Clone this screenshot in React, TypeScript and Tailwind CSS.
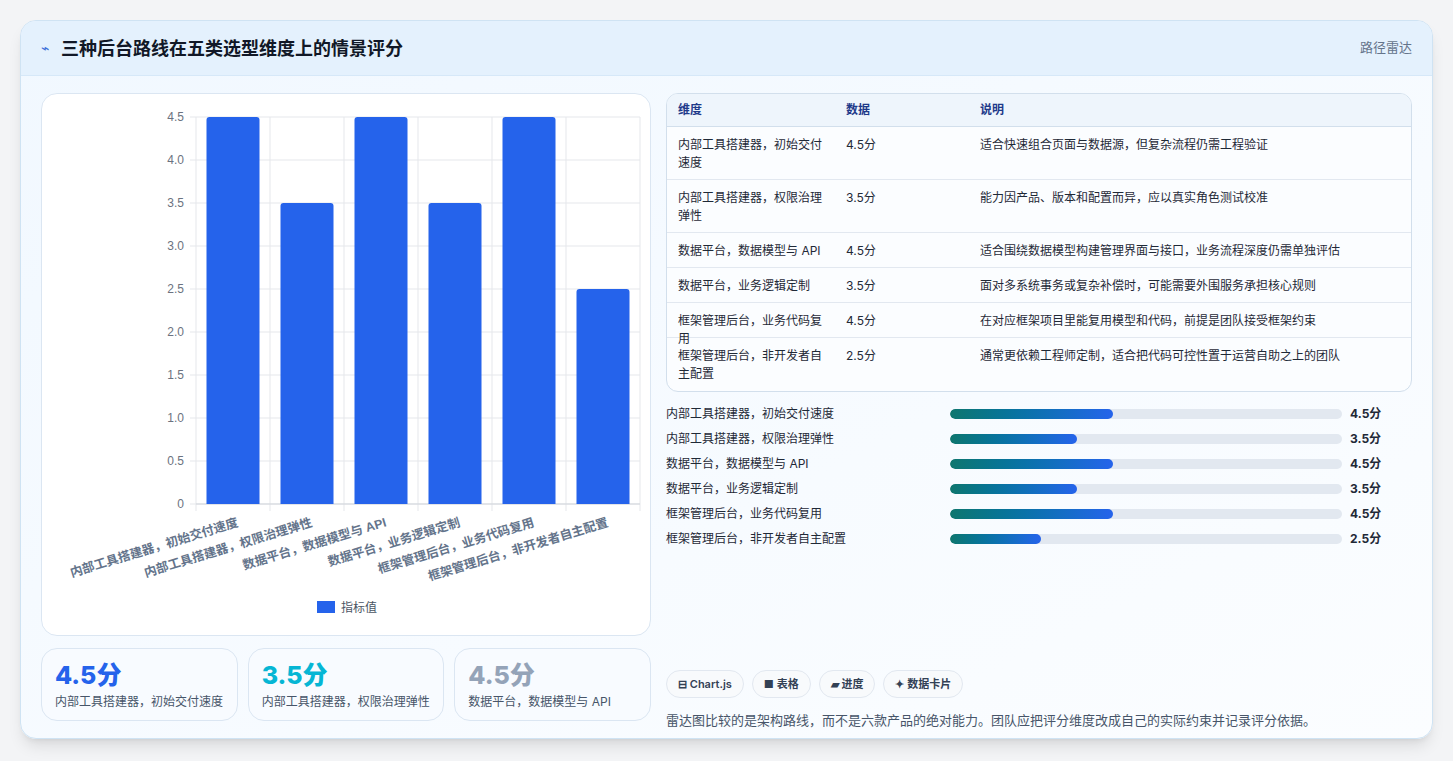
import React from "react";

const dims = [
  ["内部工具搭建器，初始交付速度", 4.5, "适合快速组合页面与数据源，但复杂流程仍需工程验证"],
  ["内部工具搭建器，权限治理弹性", 3.5, "能力因产品、版本和配置而异，应以真实角色测试校准"],
  ["数据平台，数据模型与 API", 4.5, "适合围绕数据模型构建管理界面与接口，业务流程深度仍需单独评估"],
  ["数据平台，业务逻辑定制", 3.5, "面对多系统事务或复杂补偿时，可能需要外围服务承担核心规则"],
  ["框架管理后台，业务代码复用", 4.5, "在对应框架项目里能复用模型和代码，前提是团队接受框架约束"],
  ["框架管理后台，非开发者自主配置", 2.5, "通常更依赖工程师定制，适合把代码可控性置于运营自助之上的团队"],
] as const;

const tallRows = [true, true, false, false, false, true];

function Chart() {
  const x0 = 154, x1 = 598, yTop = 23, yBot = 410;
  const unit = (yBot - yTop) / 4.5;
  const ticks = [0, 0.5, 1, 1.5, 2, 2.5, 3, 3.5, 4, 4.5];
  const cw = (x1 - x0) / 6;
  return (
    <svg width="610" height="543" className="block" style={{ fontFamily: "Liberation Sans, Noto Sans CJK SC, sans-serif" }}>
      {ticks.map((t) => {
        const y = yBot - t * unit;
        return (
          <g key={t}>
            <line x1={x0 - 6} x2={x1} y1={y} y2={y} stroke="#e5e7eb" />
            <text x={x0 - 12} y={y + 4} fontSize="12" fill="#6b7280" textAnchor="end">{t === 0 ? "0" : t.toFixed(1)}</text>
          </g>
        );
      })}
      {Array.from({ length: 7 }).map((_, i) => (
        <line key={i} x1={x0 + i * cw} x2={x0 + i * cw} y1={yTop} y2={yBot + 7} stroke="#e5e7eb" />
      ))}
      <line x1={x0} x2={x1} y1={yBot} y2={yBot} stroke="#d1d5db" />
      {dims.map(([label, v], i) => {
        const cx = x0 + i * cw + cw / 2;
        const h = v * unit;
        return (
          <g key={i}>
            <path d={`M${cx - 26.5} ${yBot} V${yBot - h + 3} Q${cx - 26.5} ${yBot - h} ${cx - 23.5} ${yBot - h} H${cx + 23.5} Q${cx + 26.5} ${yBot - h} ${cx + 26.5} ${yBot - h + 3} V${yBot} Z`} fill="#2563eb" />
            <text x={cx + 6} y={yBot + 22} fontSize="12.5" fontWeight="700" fill="#64748b" textAnchor="end" transform={`rotate(-17 ${cx + 6} ${yBot + 22})`}>{label}</text>
          </g>
        );
      })}
      <rect x="275" y="507" width="18" height="12" fill="#2563eb" />
      <text x="299" y="518" fontSize="12" fill="#4b5563">指标值</text>
    </svg>
  );
}

export default function App() {
  return (
    <div className="min-h-[761px] bg-[#f3f4f6] p-5" style={{ fontFamily: "Inter, 'Noto Sans CJK SC', sans-serif" }}>
      <div className="w-[1413px] h-[719px] rounded-2xl border border-[#cfe3f3] bg-gradient-to-br from-[#f1f8ff] to-[#fbfdff] shadow-lg overflow-hidden flex flex-col">
        <div className="h-[55px] shrink-0 flex items-center justify-between px-5 bg-[#e4f1fd] border-b border-[#d6e8f8]">
          <div className="flex items-center gap-3">
            <span className="text-[#3b6fd9] text-sm">⌁</span>
            <span className="text-[18px] font-bold text-[#111827]">三种后台路线在五类选型维度上的情景评分</span>
          </div>
          <span className="text-[13px] text-[#64748b]">路径雷达</span>
        </div>
        <div className="flex gap-[15px] px-5 pt-[17px]">
          <div className="w-[610px] flex flex-col gap-3">
            <div className="h-[543px] rounded-2xl border border-[#dbe6f2] bg-white overflow-hidden">
              <Chart />
            </div>
            <div className="grid grid-cols-3 gap-[10px]">
              {[["4.5分", "text-[#2563eb]", dims[0][0]], ["3.5分", "text-[#06b6d4]", dims[1][0]], ["4.5分", "text-[#94a3b8]", dims[2][0]]].map(([v, c, l], i) => (
                <div key={i} className="h-[73px] rounded-2xl border border-[#dbe6f2] bg-[#f8fbff] px-[13px] pt-[10px]">
                  <div className={`text-[25px] font-extrabold leading-[32px] ${c}`}>{v}</div>
                  <div className="text-[12px] text-[#475569] mt-[2px]">{l}</div>
                </div>
              ))}
            </div>
          </div>
          <div className="flex-1 flex flex-col">
            <div className="rounded-xl border border-[#d2dfec] overflow-hidden bg-[#fbfdff]">
              <div className="flex h-[33px] items-center bg-[#eef5fc] border-b border-[#d2dfec] text-[12px] font-semibold text-[#1e3a8a]">
                <div className="w-[179px] pl-[11px]">维度</div>
                <div className="w-[134px]">数据</div>
                <div>说明</div>
              </div>
              {dims.map(([l, v, d], i) => (
                <div key={i} className={`flex items-start text-[12px] text-[#1f2937] leading-[18px] pt-[9px] ${tallRows[i] ? "h-[53px]" : "h-[35px]"} ${i < 5 ? "border-b border-[#e2e8f0]" : ""}`}>
                  <div className="w-[179px] pl-[11px] pr-[14px]">{l}</div>
                  <div className="w-[134px]">{v}分</div>
                  <div className="flex-1">{d}</div>
                </div>
              ))}
            </div>
            <div className="flex flex-col mt-[9px]">
              {dims.map(([l, v], i) => (
                <div key={i} className="flex items-center h-[25px] text-[12px] text-[#1f2937]">
                  <div className="w-[284px]">{l}</div>
                  <div className="w-[392px] h-[10px] rounded-full bg-[#e2e8f0] overflow-hidden">
                    <div className="h-full rounded-full bg-gradient-to-r from-[#0f766e] to-[#2563eb]" style={{ width: `${(v / 10.8) * 100}%` }} />
                  </div>
                  <div className="ml-2 font-bold text-[#1f2937]">{v}分</div>
                </div>
              ))}
            </div>
            <div className="flex gap-2 mt-[119px]">
              {["⊟ Chart.js", "■ 表格", "▰ 进度", "✦ 数据卡片"].map((p) => (
                <span key={p} className="h-[28px] px-[11px] flex items-center rounded-full border border-[#e2e8f0] bg-[#f8fafc] text-[11px] font-semibold text-[#334155]">{p}</span>
              ))}
            </div>
            <div className="mt-[13px] text-[13px] text-[#475569]">雷达图比较的是架构路线，而不是六款产品的绝对能力。团队应把评分维度改成自己的实际约束并记录评分依据。</div>
          </div>
        </div>
      </div>
    </div>
  );
}
